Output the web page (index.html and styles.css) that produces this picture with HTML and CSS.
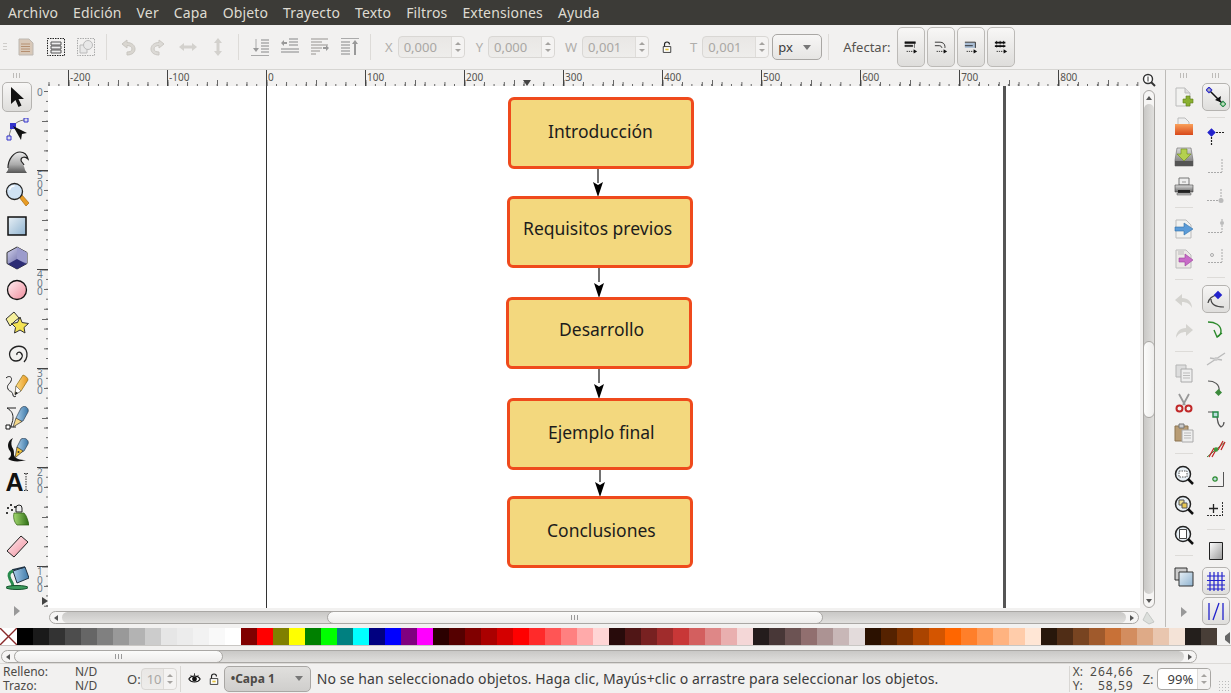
FILE: index.html
```html
<!DOCTYPE html>
<html lang="es">
<head>
  <meta charset="UTF-8">
  <title>Inkscape</title>
  <link rel="stylesheet" href="styles.css">
</head>
<body>
  <!-- shared gradients for the icons -->
  <svg class="defs" width="0" height="0">
    <defs>
      <linearGradient id="gBlue" x1="0" y1="0" x2="1" y2="1"><stop offset="0" stop-color="#e8f0f6"/><stop offset="1" stop-color="#8fb3d0"/></linearGradient>
      <linearGradient id="gPink" x1="0" y1="0" x2="1" y2="1"><stop offset="0" stop-color="#fff0f2"/><stop offset="1" stop-color="#f08c9c"/></linearGradient>
      <linearGradient id="gPurple" x1="0" y1="0" x2="1" y2="1"><stop offset="0" stop-color="#d5d5ee"/><stop offset="1" stop-color="#44448c"/></linearGradient>
      <linearGradient id="gGrey" x1="0" y1="0" x2="0" y2="1"><stop offset="0" stop-color="#ddd"/><stop offset="1" stop-color="#666"/></linearGradient>
      <linearGradient id="gWave" x1="0" y1="0" x2="0" y2="1"><stop offset="0" stop-color="#eee"/><stop offset=".6" stop-color="#aaa"/><stop offset="1" stop-color="#555"/></linearGradient>
      <linearGradient id="gOrange" x1="0" y1="0" x2="0" y2="1"><stop offset="0" stop-color="#f9a05a"/><stop offset="1" stop-color="#d8481a"/></linearGradient>
      <linearGradient id="gWhite" x1="0" y1="0" x2="1" y2="1"><stop offset="0" stop-color="#fff"/><stop offset="1" stop-color="#999"/></linearGradient>
      <linearGradient id="gNib" x1="0" y1="0" x2="1" y2="0"><stop offset="0" stop-color="#a8cce8"/><stop offset="1" stop-color="#3c78a8"/></linearGradient>
      <linearGradient id="gPencil" x1="0" y1="0" x2="1" y2="0"><stop offset="0" stop-color="#fbe08a"/><stop offset="1" stop-color="#e89820"/></linearGradient>
      <linearGradient id="gBottle" x1="0" y1="0" x2="1" y2="0"><stop offset="0" stop-color="#a4d870"/><stop offset="1" stop-color="#2c6c14"/></linearGradient>
    </defs>
  </svg>

  <nav class="menubar">
    <span>Archivo</span><span>Edición</span><span>Ver</span><span>Capa</span><span>Objeto</span><span>Trayecto</span><span>Texto</span><span>Filtros</span><span>Extensiones</span><span>Ayuda</span>
  </nav>

  <div class="toolbar">
    <div class="grip"></div>
    <div class="tb-icon"><svg class="i18" viewBox="0 0 18 18"><path d="M2 1h10l4 4v12H2z" fill="#d8c8b8" stroke="#bdb8b2"/><path d="M4 6h9M4 8.500h9M4 11h9M4 13.500h9" stroke="#b58f70" stroke-width="1.200"/></svg></div>
    <div class="tb-icon"><svg class="i18" viewBox="0 0 18 18"><path d="M.5.500h17v17H.5z" fill="none" stroke="#222" stroke-dasharray="1.500 1"/><path d="M4 4h10v3H4zM4 8h10v3H4zM4 12h10v3H4z" fill="#eee" stroke="#555"/></svg></div>
    <div class="tb-icon"><svg class="i18" viewBox="0 0 18 18"><path d="M.5.500h17v17H.5z" fill="none" stroke="#aaa" stroke-dasharray="1.500 1"/><path d="M3 7h7v8H3z" fill="#e8e8e8" stroke="#bbb"/><circle cx="11" cy="7" r="4.500" fill="#e8e8e8" stroke="#bbb"/></svg></div>
    <div class="tb-sep"></div>
    <div class="tb-icon"><svg class="i18" viewBox="0 0 18 18"><path d="M8 2L3 6l5 4V7.500c3 0 5 1.500 5 3.500s-2 3-5 3v3c5 0 8-2.500 8-6S13 4.500 8 4.500z" fill="#d9d6d0" stroke="#c9c6c0"/></svg></div>
    <div class="tb-icon"><svg class="i18" viewBox="0 0 18 18"><path d="M10 2l5 4-5 4V7.500c-3 0-5 1.500-5 3.500s2 3 5 3v3c-5 0-8-2.500-8-6s3-6.500 8-6.500z" fill="#dcdad6" stroke="#cbc8c3"/></svg></div>
    <div class="tb-icon"><svg class="i18" viewBox="0 0 18 18"><path d="M0 9l5-4v2.500h8V5l5 4-5 4v-2.500H5V13z" fill="#d3d1cd"/></svg></div>
    <div class="tb-icon"><svg class="i18" viewBox="0 0 18 18"><path d="M9 0l4 5h-2.500v8H13l-4 5-4-5h2.500V5H5z" fill="#d3d1cd"/></svg></div>
    <div class="tb-sep"></div>
    <div class="tb-icon"><svg class="i18" viewBox="0 0 18 18"><path d="M0 17.500h18M5 1v11" stroke="#aaa"/><path d="M2 10l3 4 3-4z" fill="#999"/><path d="M10 2h8M10 5h8M10 8h8M10 11h8M10 14h8" stroke="#aaa" stroke-width="1.500"/></svg></div>
    <div class="tb-icon"><svg class="i18" viewBox="0 0 18 18"><path d="M8 1h9M8 4h9M8 7h9M0 11h18M0 14h18" stroke="#aaa" stroke-width="1.500"/><path d="M0 5l3-3v2h3v2H3v2z" fill="#999"/></svg></div>
    <div class="tb-icon"><svg class="i18" viewBox="0 0 18 18"><path d="M0 1h17M0 4h11M0 7h17M0 10h11M0 13h9M0 16h5" stroke="#b5b3b0" stroke-width="1.500"/><path d="M18 10l-3-3v2h-3v2h3v2z" fill="#999"/></svg></div>
    <div class="tb-icon"><svg class="i18" viewBox="0 0 18 18"><path d="M0 .500h18" stroke="#aaa"/><path d="M0 4h9M0 7h9M0 10h9M0 13h9M0 16h9" stroke="#aaa" stroke-width="1.500"/><path d="M14 2l-3 4h2v11h2V6h2z" fill="#999"/></svg></div>
    <div class="tb-sep"></div>

    <label class="xy xy-x">X</label>
    <div class="spin"><span>0,000</span><i class="spin-arrows"></i></div>
    <label class="xy xy-y">Y</label>
    <div class="spin"><span>0,000</span><i class="spin-arrows"></i></div>
    <label class="xy xy-w">W</label>
    <div class="spin"><span>0,001</span><i class="spin-arrows"></i></div>
    <svg class="lock-big" width="10" height="12" viewBox="0 0 12 14"><path d="M3 7V4a3 3 0 0 1 6 0" fill="none" stroke="#222" stroke-width="1.400"/><path d="M1.500 6.500h9v7h-9z" fill="#fff" stroke="#222"/><path d="M4 9h4v2H4z" fill="#e4c23c"/></svg>
    <label class="xy xy-t">T</label>
    <div class="spin"><span>0,001</span><i class="spin-arrows"></i></div>
    <div class="combo combo-unit"><span>px</span><i class="combo-arrow"></i></div>
    <div class="tb-sep tb-sep-unit"></div>
    <span class="affect-label">Afectar:</span>
    <div class="affect">
      <button class="affect-btn"><svg class="i14" viewBox="0 0 16 16"><path d="M1 2h12v2H1zM1 6h9v1.500H1zM12 4v5" fill="#111" stroke="#111" stroke-width=".6"/><path d="M3 13h8" stroke="#222" stroke-dasharray="1.500 1"/><path d="M11 10.500l4 2.500-4 2.500z" fill="#111"/></svg></button>
      <button class="affect-btn"><svg class="i14" viewBox="0 0 16 16"><path d="M1 2.500h6c3 0 5.500 2 5.500 5V9M1 6.500h5c1.500 0 3 1 3 2.500" fill="none" stroke="#222"/><path d="M3 13h8" stroke="#222" stroke-dasharray="1.500 1"/><path d="M11 10.500l4 2.500-4 2.500z" fill="#111"/></svg></button>
      <button class="affect-btn"><svg class="i14" viewBox="0 0 16 16"><path d="M1 3h12v6H1z" fill="#a9bdd4"/><path d="M1 2.500h12M13 2.500V9M1 6.500h9" stroke="#222"/><path d="M3 13h8" stroke="#222" stroke-dasharray="1.500 1"/><path d="M11 10.500l4 2.500-4 2.500z" fill="#111"/></svg></button>
      <button class="affect-btn"><svg class="i14" viewBox="0 0 16 16"><path d="M1 3h12M1 7h12" stroke="#111" stroke-width="2"/><path d="M3 1v8M7 1v8M11 1v8" stroke="#111" stroke-dasharray="1.500 1"/><path d="M3 13h8" stroke="#222" stroke-dasharray="1.500 1"/><path d="M11 10.500l4 2.500-4 2.500z" fill="#111"/></svg></button>
    </div>
  </div>

  <div class="main">
    <!-- drawing tools -->
    <aside class="tools">
      <div class="dock-handle"></div>
      <div class="tool on"><svg class="i24" viewBox="0 0 24 24"><path d="M6 2v17l4.500-4 3 7 3-1.500-3-6.500H19z" fill="#111"/></svg></div>
      <div class="tool"><svg class="i24" viewBox="0 0 24 24"><path d="M4 19C5 10 10 3 19 2" fill="none" stroke="#777"/><path d="M2 18h4v4H2zM19 0h4v4h-4z" fill="#dde" stroke="#33c"/><path d="M5 5h6v6H5z" fill="#33c"/><path d="M8 8l14 7-5 1-1 6z" fill="#111"/></svg></div>
      <div class="tool"><svg class="i24" viewBox="0 0 24 24"><path d="M1 23l2-3c0-3 1-3 1-6C5 7 10 2 15 2c4 0 7 3 8 7-3-3-7-2-7 1 0 3 3 4 4 10l2 3z" fill="url(#gWave)"/><path d="M3 18C3 9 9 2 15 2c4 0 7 3 8 7-3-3-7-2-7 1 0 2 2 3 3 5" fill="none" stroke="#222" stroke-width="1.200"/></svg></div>
      <div class="tool"><svg class="i24" viewBox="0 0 24 24"><path d="M14 15l3-2 7 8-3 3z" fill="#e89c24" stroke="#a86a10" stroke-width=".7"/><circle cx="9.500" cy="9.500" r="8" fill="#cfe2f4" stroke="#222" stroke-width="1.300"/><path d="M4.500 8a5 5 0 0 1 5-4" fill="none" stroke="#fff" stroke-width="1.500"/></svg></div>
      <div class="tool"><svg class="i24" viewBox="0 0 24 24"><path d="M3 3h18v18H3z" fill="url(#gBlue)" stroke="#111" stroke-width="1.500"/></svg></div>
      <div class="tool"><svg class="i24" viewBox="0 0 24 24"><path d="M12 1l10 5.500v11L12 23 2 17.500v-11z" fill="url(#gPurple)" stroke="#333"/><path d="M12 1l10 5.500v11l-10-4z" fill="#9c9ccc"/><path d="M3 18l9-5 9 5-9 5z" fill="#2c2c74"/></svg></div>
      <div class="tool"><svg class="i24" viewBox="0 0 24 24"><circle cx="12" cy="12" r="9.500" fill="url(#gPink)" stroke="#111" stroke-width="1.300"/></svg></div>
      <div class="tool"><svg class="i24" viewBox="0 0 24 24"><path d="M1 9l8-7 5 6-4 3-5 5z" fill="#f6f09c" stroke="#333"/><path d="M15 7l2 5.500 6.500 1-4.500 4 1 5.500-5-3-5.500 3 1-5.500-4-4 6-1z" fill="#f4e252" stroke="#333"/></svg></div>
      <div class="tool"><svg class="i24" viewBox="0 0 24 24"><path d="M12 13c-1-2 2-4 4-2 3 3 0 8-5 8-6 0-8-7-5-11 4-5 12-5 15 0 2 4 1 9-2 12" fill="none" stroke="#222" stroke-width="1.300"/></svg></div>
      <div class="tool"><svg class="i24" viewBox="0 0 24 24"><path d="M1 4c3-3 7-1 5 3-1 3-5 4-3 8 1 3 4 1 5 6 0 2 2 2 3 1" fill="none" stroke="#222"/><path d="M10 20l1-8 7-11c3 1 5 3 5 5l-7 11z" fill="url(#gPencil)" stroke="#8a6a10" stroke-width=".7"/><path d="M10 21l1-9 5 5z" fill="#fff" stroke="#555" stroke-width=".6"/><path d="M10 21l.5-3.500 2.500 1.500z" fill="#111"/></svg></div>
      <div class="tool"><svg class="i24" viewBox="0 0 24 24"><path d="M2 2h9M2 2c5 3 6 6 6 10s-2 6-2 9" fill="none" stroke="#222"/><path d="M1 19h4v4H1z" fill="#fff" stroke="#111"/><path d="M5 21h6" stroke="#222"/><path d="M11 12l5-10 3-2c3 1 5 3 4 6l-5 9-4 1z" fill="url(#gNib)" stroke="#345" stroke-width=".7"/><path d="M8 21l3-9 6 3.500z" fill="#f4d88a" stroke="#333" stroke-width=".7"/></svg></div>
      <div class="tool"><svg class="i24" viewBox="0 0 24 24"><path d="M8 0C2 3 2 9 5 13c2 3 1 6-2 8 4 3 12 3 18 1-6 0-11-1-12-5 0-4 0-5-2-8-1-3-1-6 1-9z" fill="#111"/><path d="M12 9l4-8 3-1c3 1 5 3 4 6l-4 7-4 2z" fill="url(#gNib)" stroke="#345" stroke-width=".7"/><path d="M10 20l2-11 6 4z" fill="#f4c53a" stroke="#333" stroke-width=".7"/><circle cx="13.500" cy="14" r="1" fill="#333"/></svg></div>
      <div class="tool tool-text"><span>A</span><svg width="5" height="18" viewBox="0 0 5 18"><path d="M0 .500h4M2 .500v17M0 17.500h4" fill="none" stroke="#333" stroke-dasharray="1.500 1"/></svg></div>
      <div class="tool"><svg class="i24" viewBox="0 0 24 24"><circle cx="3" cy="6" r="1"/><circle cx="6" cy="3" r="1"/><circle cx="7" cy="8" r="1"/><circle cx="2" cy="11" r="1"/><circle cx="10" cy="5" r="1"/><path d="M11 6a3 3 0 0 1 6 0v4h-6z" fill="#eee" stroke="#222"/><path d="M9 11h10c3 3 4 8 5 12H12c-3-3-4-8-3-12z" fill="url(#gBottle)" stroke="#2c5c10" stroke-width=".7"/></svg></div>
      <div class="tool"><svg class="i24" viewBox="0 0 24 24"><path d="M16 2l7 6L9 23l-7-6z" fill="url(#gPink)" stroke="#222"/></svg></div>
      <div class="tool"><svg class="i24" viewBox="0 0 24 24"><path d="M8 5l12-4 4 11-12 5z" fill="url(#gNib)" stroke="#234"/><path d="M7 4l13-3" stroke="#234" stroke-width="1.500"/><path d="M8 5c-4 1-5 4-3 8 2 3 3 5 3 8" fill="none" stroke="#288a4c" stroke-width="3"/><ellipse cx="12" cy="21.500" rx="11" ry="2" fill="#3c9c5c" stroke="#14502c"/></svg></div>
      <div class="tool-more"><i class="tri-right"></i></div>
    </aside>

    <div class="workspace">
      <div class="ruler-corner"></div>
      <div class="hruler">
        <div class="rh rh-lead"></div>
        <div class="rh">-200</div><div class="rh">-100</div><div class="rh">0</div><div class="rh">100</div><div class="rh">200</div><div class="rh">300</div><div class="rh">400</div><div class="rh">500</div><div class="rh">600</div><div class="rh">700</div><div class="rh">800</div>
        <i class="ruler-mark-h"></i>
      </div>
      <div class="zoom-corner"><svg width="14" height="14" viewBox="0 0 14 14"><circle cx="6" cy="6" r="4.500" fill="#fff" stroke="#333" stroke-width="1.400"/><path d="M9 9l4 4" stroke="#333" stroke-width="2"/><path d="M6 3.500v5" stroke="#333"/></svg></div>

      <div class="vruler">
        <div class="rv rv-lead">0</div><div class="rv">500</div><div class="rv">400</div><div class="rv">300</div><div class="rv">200</div><div class="rv">100</div>
        <i class="ruler-mark-v"></i>
      </div>

      <div class="canvas">
        <div class="page-line"></div>
        <div class="page-line thick"></div>
        <svg class="connectors" width="1092" height="522">
          <g stroke="#444" stroke-width="1.500">
            <path d="M550 83v14M551 182v14M551 283v14M552 384v12"/>
          </g>
          <path d="M550 111l-5-15 5 3 5-3z"/>
          <path d="M551 212l-5-15 5 3 5-3z"/>
          <path d="M551 313l-5-15 5 3 5-3z"/>
          <path d="M552 411l-5-15 5 3 5-3z"/>
        </svg>
        <div class="node n1">Introducción</div>
        <div class="node n2">Requisitos previos</div>
        <div class="node n3">Desarrollo</div>
        <div class="node n4">Ejemplo final</div>
        <div class="node n5">Conclusiones</div>
      </div>

      <div class="vscroll">
        <i class="sb-end"><i class="tri-up"></i></i>
        <div class="sb-track-v"><div class="sb-thumb-v"></div></div>
        <i class="sb-end"><i class="tri-down"></i></i>
      </div>

      <div class="hscroll-row">
        <div class="hscroll">
          <i class="sb-end"><i class="tri-left"></i></i>
          <div class="sb-track"><div class="sb-thumb main-thumb"><b class="dots"></b></div></div>
          <i class="sb-end"><i class="tri-right-sm"></i></i>
        </div>
        <svg class="cms" width="14" height="14" viewBox="0 0 14 14"><path d="M6 1l7 10-5 2-6-4z" fill="#dcdfdc" stroke="#c5c8c5"/></svg>
      </div>
    </div>

    <!-- commands -->
    <aside class="cmds">
      <div class="dock-handle"></div>
      <div class="cmd"><svg class="i20" viewBox="0 0 20 20"><path d="M2 1h9l5 5v13H2z" fill="#f2f2f0" stroke="#bbb"/><path d="M11 1v5h5" fill="#ddd" stroke="#bbb"/><path d="M12 9h4v3h3v4h-3v3h-4v-3H9v-4h3z" fill="#8ab030" stroke="#5c7c18" stroke-width=".6"/></svg></div>
      <div class="cmd"><svg class="i20" viewBox="0 0 20 20"><path d="M4 1h7l4 4v5H4z" fill="#eee" stroke="#bbb"/><path d="M1 7h18v11H1z" fill="url(#gOrange)"/></svg></div>
      <div class="cmd"><svg class="i20" viewBox="0 0 20 20"><path d="M3 1h14l2 12v6H1v-6z" fill="url(#gGrey)" stroke="#666" stroke-width=".6"/><path d="M1 14h18v5H1z" fill="#555"/><path d="M7 2h6v5h4l-7 7-7-7h4z" fill="#b4d050" stroke="#6c8c18" stroke-width=".6"/></svg></div>
      <div class="cmd"><svg class="i20" viewBox="0 0 20 20"><path d="M5 1h10v7H5z" fill="#eee" stroke="#777"/><path d="M1 8h18v7H1z" fill="url(#gGrey)" stroke="#444" stroke-width=".6"/><path d="M4 13h12v3H4z" fill="#222"/><path d="M3 16h14v2H3z" fill="#bbb" stroke="#555" stroke-width=".5"/><path d="M8 5h4" stroke="#999"/></svg></div>
      <div class="dock-sep"></div>
      <div class="cmd"><svg class="i20" viewBox="0 0 20 20"><path d="M2 1h10l5 5v13H2z" fill="#f2f2f0" stroke="#bbb"/><path d="M1 8h9V4l9 6-9 6v-4H1z" fill="#5c9cd8" stroke="#3070a8" stroke-width=".6"/></svg></div>
      <div class="cmd"><svg class="i20" viewBox="0 0 20 20"><path d="M2 1h10l5 5v13H2z" fill="#ece9e6" stroke="#bbb"/><path d="M4 3h6M4 5h6" stroke="#bbb"/><path d="M5 9h6V5l8 6-8 6v-4H5z" fill="#c86cc8" stroke="#9c409c" stroke-width=".6"/></svg></div>
      <div class="dock-sep"></div>
      <div class="cmd"><svg class="i20" viewBox="0 0 20 20"><path d="M8 3L1 9l7 6v-4c5 0 8 2 10 6 0-6-4-10-10-10z" fill="#d4d3cf"/></svg></div>
      <div class="cmd"><svg class="i20" viewBox="0 0 20 20"><path d="M12 3l7 6-7 6v-4c-5 0-8 2-10 6 0-6 4-10 10-10z" fill="#d4d3cf"/></svg></div>
      <div class="dock-sep"></div>
      <div class="cmd"><svg class="i20" viewBox="0 0 20 20"><path d="M2 2h10v12H2z" fill="#ddd" stroke="#b5b5b5"/><path d="M7 6h11v13H7z" fill="#eee" stroke="#aaa"/><path d="M9 10h7M9 12.500h7M9 15h7" stroke="#bbb"/></svg></div>
      <div class="cmd"><svg class="i20" viewBox="0 0 20 20"><path d="M5 1l6 11M15 1L9 12" stroke="#999" stroke-width="1.800"/><circle cx="5.500" cy="15.500" r="3" fill="none" stroke="#c02828" stroke-width="2"/><circle cx="14.500" cy="15.500" r="3" fill="none" stroke="#c02828" stroke-width="2"/></svg></div>
      <div class="cmd"><svg class="i20" viewBox="0 0 20 20"><path d="M1 3h13v15H1z" fill="#b89c74" stroke="#8c7450"/><path d="M5 1h5v4H5z" fill="#ccc" stroke="#777"/><path d="M8 7h11v12H8z" fill="#eee" stroke="#aaa"/><path d="M10 10h7M10 12.500h7M10 15h7" stroke="#bbb"/></svg></div>
      <div class="dock-sep"></div>
      <div class="cmd"><svg class="i20" viewBox="0 0 20 20"><circle cx="9" cy="9" r="7.500" fill="#e8f0f6" stroke="#222" stroke-width="1.500"/><path d="M5 6h8v6H5z" fill="#fff" stroke="#555" stroke-dasharray="1.500 1"/><path d="M14 14l5 5" stroke="#111" stroke-width="2.500"/></svg></div>
      <div class="cmd"><svg class="i20" viewBox="0 0 20 20"><circle cx="9" cy="9" r="7.500" fill="#e8f0f6" stroke="#222" stroke-width="1.500"/><path d="M5 5h5v5H5z" fill="#f0e090" stroke="#555"/><path d="M8 8h5v5H8z" fill="#e8c850" stroke="#555"/><path d="M14 14l5 5" stroke="#111" stroke-width="2.500"/></svg></div>
      <div class="cmd"><svg class="i20" viewBox="0 0 20 20"><circle cx="9" cy="9" r="7.500" fill="#e8f0f6" stroke="#222" stroke-width="1.500"/><path d="M5.500 4.500h7v9h-7z" fill="#fff" stroke="#444"/><path d="M14 14l5 5" stroke="#111" stroke-width="2.500"/></svg></div>
      <div class="dock-sep"></div>
      <div class="cmd"><svg class="i20" viewBox="0 0 20 20"><path d="M1 1h12v12H1z" fill="#ccc" stroke="#333"/><path d="M5 5h14v14H5z" fill="url(#gBlue)" stroke="#333"/></svg></div>
      <div class="cmd-more"><i class="tri-right"></i></div>
    </aside>

    <!-- snap bar -->
    <aside class="snaps">
      <div class="dock-handle"></div>
      <div class="snap on"><svg class="i20" viewBox="0 0 20 20"><path d="M3 3l14 14" stroke="#111" stroke-width="1.500"/><path d="M1 1h4v4H1z" fill="#aab" stroke="#22c" transform="rotate(45 3 3)"/><path d="M15 15h4v4h-4z" fill="#bdb" stroke="#284" transform="rotate(45 17 17)"/><path d="M15 9l-1 6-5-2z" fill="#111"/></svg></div>
      <div class="dock-sep dashed-off"></div>
      <div class="snap"><svg class="i20" viewBox="0 0 20 20"><path d="M7 5.500h11M5.500 7v11" stroke="#222" stroke-width="1.200" stroke-dasharray="2 1"/><path d="M3 3h5v5H3z" fill="#22c" stroke="#22c" transform="rotate(45 5.500 5.500)"/></svg></div>
      <div class="snap"><svg class="i20" viewBox="0 0 20 20"><path d="M2 15.500h14M16 2v13" stroke="#aaa" stroke-dasharray="2 1"/></svg></div>
      <div class="snap"><svg class="i20" viewBox="0 0 20 20"><path d="M1 13.500h14M15 2v10" stroke="#aaa" stroke-dasharray="2 1"/><circle cx="15" cy="13.500" r="2.500" fill="#bbb"/></svg></div>
      <div class="snap"><svg class="i20" viewBox="0 0 20 20"><path d="M2 15.500h14M16 2v13" stroke="#aaa" stroke-dasharray="2 1"/><circle cx="16" cy="6" r="2" fill="#bbb"/></svg></div>
      <div class="snap"><svg class="i20" viewBox="0 0 20 20"><path d="M2 15.500h14M16 2v13" stroke="#aaa" stroke-dasharray="2 1"/><circle cx="6" cy="8" r="1.500" fill="none" stroke="#aaa"/></svg></div>
      <div class="dock-sep"></div>
      <div class="snap on"><svg class="i20" viewBox="0 0 20 20"><path d="M2 14C3 8 8 7 12 5M5 10c0 5 4 8 13 8" fill="none" stroke="#444" stroke-width="1.200"/><path d="M9 3h6v6H9z" fill="#22c" transform="rotate(45 12 6)"/></svg></div>
      <div class="snap"><svg class="i20" viewBox="0 0 20 20"><path d="M2 3c7 0 13 3 13 9 0 3-2 5-4 6" fill="none" stroke="#2c8a2c" stroke-width="1.400"/><path d="M8 11l3 7 5-4" fill="none" stroke="#2c8a2c" stroke-width="1.400"/></svg></div>
      <div class="snap"><svg class="i20" viewBox="0 0 20 20"><path d="M1 16L19 4M4 9l12 2" stroke="#bbb" stroke-width="1.400"/><circle cx="10" cy="10" r="2" fill="#ccc"/></svg></div>
      <div class="snap"><svg class="i20" viewBox="0 0 20 20"><path d="M2 2c6 0 12 3 11 10" fill="none" stroke="#555" stroke-width="1.200"/><path d="M10 11h5v5h-5z" fill="#3c8a3c" transform="rotate(45 12.500 13.500)"/></svg></div>
      <div class="snap"><svg class="i20" viewBox="0 0 20 20"><path d="M2 3h5M11 8c1 4 0 7 4 10 2-1 3-3 3-5" fill="none" stroke="#555" stroke-width="1.200"/><path d="M7 3h5v5H7z" fill="#bdd" stroke="#284" stroke-width="1.400"/></svg></div>
      <div class="snap"><svg class="i20" viewBox="0 0 20 20"><path d="M1 18L19 3" stroke="#3c8a3c"/><path d="M3 18L8 9M6 18l5-9M12 11l5-9M15 11l4-8" stroke="#c02828" stroke-width="1.300"/><circle cx="10" cy="10.500" r="2.200" fill="#3c9a3c"/></svg></div>
      <div class="snap"><svg class="i20" viewBox="0 0 20 20"><path d="M2 17.500h15.500V3" fill="none" stroke="#555"/><circle cx="9" cy="10" r="2.200" fill="#bdd" stroke="#2c8a2c" stroke-width="1.200"/></svg></div>
      <div class="snap"><svg class="i20" viewBox="0 0 20 20"><path d="M3 9.500h9M7.500 5v9" stroke="#222" stroke-width="1.300"/><path d="M1 16.500h16M16.500 3v13" stroke="#333" stroke-dasharray="2 1"/></svg></div>
      <div class="dock-sep"></div>
      <div class="snap"><svg class="i20" viewBox="0 0 20 20"><path d="M3.500 1.500h13v17h-13z" fill="url(#gWhite)" stroke="#222"/></svg></div>
      <div class="snap on"><svg class="i20" viewBox="0 0 20 20"><path d="M1 5h18M1 9.500h18M1 14h18M1 18h18M4 1v19M8 1v19M12 1v19M16 1v19" stroke="#2222cc" stroke-width="1.200"/></svg></div>
      <div class="snap on"><svg class="i20" viewBox="0 0 20 20"><path d="M3 2v17M17 2v17M7 19L13 2" stroke="#2222cc" stroke-width="1.300"/></svg></div>
    </aside>
  </div>

  <div class="palette">
    <div class="swatch-none"><svg width="17" height="17" viewBox="0 0 17 17"><path d="M0 0l17 17M17 0L0 17" stroke="#8a2a2a" stroke-width="1.400"/></svg></div>
    <span style="background:#000000"></span><span style="background:#1a1a1a"></span><span style="background:#333333"></span><span style="background:#4d4d4d"></span><span style="background:#666666"></span><span style="background:#808080"></span><span style="background:#999999"></span><span style="background:#b3b3b3"></span><span style="background:#cccccc"></span><span style="background:#e6e6e6"></span><span style="background:#ececec"></span><span style="background:#f2f2f2"></span><span style="background:#f9f9f9"></span><span style="background:#ffffff"></span>
    <span style="background:#800000"></span><span style="background:#ff0000"></span><span style="background:#808000"></span><span style="background:#ffff00"></span><span style="background:#008000"></span><span style="background:#00ff00"></span><span style="background:#008080"></span><span style="background:#00ffff"></span><span style="background:#000080"></span><span style="background:#0000ff"></span><span style="background:#800080"></span><span style="background:#ff00ff"></span>
    <span style="background:#2b0000"></span><span style="background:#550000"></span><span style="background:#800000"></span><span style="background:#aa0000"></span><span style="background:#d40000"></span><span style="background:#ff0000"></span><span style="background:#ff2a2a"></span><span style="background:#ff5555"></span><span style="background:#ff8080"></span><span style="background:#ffaaaa"></span><span style="background:#ffd5d5"></span>
    <span style="background:#280b0b"></span><span style="background:#501616"></span><span style="background:#782121"></span><span style="background:#a02c2c"></span><span style="background:#c83737"></span><span style="background:#d35f5f"></span><span style="background:#de8787"></span><span style="background:#e9afaf"></span><span style="background:#f4d7d7"></span>
    <span style="background:#241c1c"></span><span style="background:#483737"></span><span style="background:#6c5353"></span><span style="background:#916f6f"></span><span style="background:#ac9393"></span><span style="background:#c8b7b7"></span><span style="background:#e3dbdb"></span>
    <span style="background:#2b1100"></span><span style="background:#552200"></span><span style="background:#803300"></span><span style="background:#aa4400"></span><span style="background:#d45500"></span><span style="background:#ff6600"></span><span style="background:#ff7f2a"></span><span style="background:#ff9955"></span><span style="background:#ffb380"></span><span style="background:#ffccaa"></span><span style="background:#ffe6d5"></span>
    <span style="background:#28170b"></span><span style="background:#502d16"></span><span style="background:#784421"></span><span style="background:#a05a2c"></span><span style="background:#c87137"></span><span style="background:#d38d5f"></span><span style="background:#deaa87"></span><span style="background:#e9c6af"></span><span style="background:#f4e3d7"></span>
    <span style="background:#241f1c"></span><span style="background:#483e37"></span>
    <i class="palette-more"></i>
  </div>

  <div class="palette-scroll">
    <div class="hscroll pal">
      <i class="sb-end"><i class="tri-left"></i></i>
      <div class="sb-track"><div class="sb-thumb pal-thumb"><b class="dots"></b></div></div>
      <i class="sb-end"><i class="tri-right-sm"></i></i>
    </div>
  </div>

  <footer class="statusbar">
    <div class="fillstroke">
      <div><span>Relleno:</span><span>N/D</span></div>
      <div><span>Trazo:</span><span>N/D</span></div>
    </div>
    <label class="opacity-label">O:</label>
    <div class="spin spin-o"><span>10</span><i class="spin-arrows"></i></div>
    <div class="st-sep"></div>
    <svg class="eye" width="13" height="12" viewBox="0 0 16 14"><path d="M1 7c3-5 11-5 14 0-3 5-11 5-14 0z" fill="#fff" stroke="#111" stroke-width="1.300"/><circle cx="8" cy="7" r="3" fill="#111"/><path d="M3 2l2 2M8 0v3M13 2l-2 2" stroke="#111"/></svg>
    <svg class="lock-small" width="10" height="12" viewBox="0 0 12 14"><path d="M3 7V4a3 3 0 0 1 6 0" fill="none" stroke="#222" stroke-width="1.400"/><path d="M1.500 6.500h9v7h-9z" fill="#fff" stroke="#222"/><path d="M4 9h4v2H4z" fill="#e4c23c"/></svg>
    <div class="combo combo-layer"><span>•Capa 1</span><i class="combo-arrow"></i></div>
    <p class="message">No se han seleccionado objetos. Haga clic, Mayús+clic o arrastre para seleccionar los objetos.</p>
    <div class="st-sep st-sep-coords"></div>
    <div class="coords">
      <div><span>X:</span><span>264,66</span></div>
      <div><span>Y:</span><span>58,59</span></div>
    </div>
    <label class="zoom-label">Z:</label>
    <div class="spin spin-z"><span>99%</span><i class="spin-arrows"></i></div>
    <i class="resize-grip"></i>
  </footer>
</body>
</html>
```

FILE: styles.css
```css
/* Inkscape window, Ubuntu Ambiance look */
* {
  box-sizing: border-box;
}
html, body {
  margin: 0;
  padding: 0;
}
body {
  width: 1231px;
  height: 693px;
  overflow: hidden;
  display: flex;
  flex-direction: column;
  background: #f2f1f0;
  color: #3c3c3c;
  font-family: "Noto Sans", sans-serif;
  font-size: 13px;
}
svg {
  display: block;
}
i {
  display: block;
  font-style: normal;
}
.defs {
  position: absolute;
}
.i14 { width: 14px; height: 14px; }
.i18 { width: 18px; height: 18px; }
.i20 { width: 20px; height: 20px; }
.i24 { width: 24px; height: 24px; }

/* menu */
.menubar {
  height: 25px;
  flex: none;
  display: flex;
  gap: 15px;
  align-items: center;
  padding-left: 8px;
  background: #3c3b37;
  color: #dfdbd2;
  font-size: 14px;
  letter-spacing: .15px;
}

/* top toolbar */
.toolbar {
  height: 45px;
  flex: none;
  display: flex;
  align-items: center;
  padding-left: 3px;
  border-bottom: 1px solid #d6d5d2;
}
.grip {
  width: 4px;
  height: 8px;
  margin-right: 4px;
  background: repeating-linear-gradient(#cfcdca 0 1px, transparent 1px 3px);
}
.tb-icon {
  width: 30px;
  display: flex;
  justify-content: center;
}
.tb-sep {
  width: 1px;
  height: 26px;
  margin: 0 6px 0 5px;
  background: #dddbd8;
}
.xy {
  color: #b0aeab;
  font-size: 13px;
}
.xy-x { margin: 0 5px 0 8px; }
.xy-y { margin: 0 5px 0 11px; }
.xy-w { margin: 0 5px 0 10px; }
.xy-t { margin: 0 5px 0 18px; }
.spin {
  width: 67px;
  height: 22px;
  display: flex;
  align-items: center;
  padding-left: 5px;
  background: linear-gradient(#e9e7e5, #eeedeb);
  border: 1px solid #d9d7d4;
  border-radius: 4px;
  color: #a9a7a4;
  position: relative;
}
.spin-arrows {
  position: absolute;
  right: 0;
  top: 0;
  width: 13px;
  height: 100%;
  background: #f4f3f2;
  border-left: 1px solid #dedcd9;
  border-radius: 0 4px 4px 0;
}
.spin-arrows::before,
.spin-arrows::after {
  content: "";
  position: absolute;
  left: 3px;
  border-left: 3px solid transparent;
  border-right: 3px solid transparent;
}
.spin-arrows::before {
  top: 5px;
  border-bottom: 3px solid #a5a3a0;
}
.spin-arrows::after {
  bottom: 5px;
  border-top: 3px solid #a5a3a0;
}
.lock-big {
  margin-left: 13px;
}
.combo {
  display: flex;
  align-items: center;
  justify-content: space-between;
  background: linear-gradient(#f7f6f5, #e6e5e3);
  border: 1px solid #a9a7a4;
  border-radius: 5px;
}
.combo-unit {
  width: 50px;
  height: 26px;
  margin-left: 3px;
  padding: 0 10px 0 5px;
}
.combo-arrow {
  border-left: 4px solid transparent;
  border-right: 4px solid transparent;
  border-top: 5px solid #777;
}
.tb-sep-unit {
  margin: 0 0 0 6px;
}
.affect-label {
  margin-left: 14px;
  color: #55534f;
  width: 45px;
  white-space: nowrap;
}
.affect {
  display: flex;
  gap: 2px;
  margin-left: 9px;
}
.affect-btn {
  width: 28px;
  height: 40px;
  padding: 0;
  display: flex;
  align-items: center;
  justify-content: center;
  background: linear-gradient(#f8f7f6, #dedddb);
  border: 1px solid #bcbab7;
  border-radius: 5px;
}

/* middle area */
.main {
  height: 557px;
  flex: none;
  display: flex;
}
.dock-handle {
  width: 8px;
  height: 12px;
  flex: none;
  margin: 0 auto;
  background: linear-gradient(90deg, #bdbbb8 1px, transparent 1px) 0 3px / 3px 5px repeat-x;
}
.tools {
  width: 34px;
  flex: none;
  display: flex;
  flex-direction: column;
  align-items: center;
}
.tool {
  width: 30px;
  height: 32px;
  flex: none;
  display: flex;
  align-items: center;
  justify-content: center;
}
.tool.on {
  height: 30px;
  margin-bottom: 2px;
  background: linear-gradient(#f8f7f6, #dedddb);
  border: 1px solid #b5b3b0;
  border-radius: 5px;
}
.tool-text {
  gap: 0;
  font-family: "Liberation Sans", sans-serif;
  font-weight: bold;
  font-size: 25px;
  line-height: 28px;
  color: #111;
}
.tool-more {
  margin-top: 12px;
}
.tri-right {
  border-top: 5px solid transparent;
  border-bottom: 5px solid transparent;
  border-left: 6px solid #999;
}

.workspace {
  width: 1131px;
  flex: none;
  display: grid;
  grid-template-columns: 14px 1092px 25px;
  grid-template-rows: 16px 522px 19px;
}

/* rulers */
.hruler {
  position: relative;
  display: flex;
  overflow: hidden;
  font-size: 10px;
  line-height: 11px;
  color: #55534f;
  background-image:
    linear-gradient(90deg, #666 1px, transparent 1px),
    linear-gradient(90deg, #666 1px, transparent 1px),
    linear-gradient(90deg, #666 1px, transparent 1px);
  background-size: 9.900px 2px, 19.800px 4px, 49.500px 6px;
  background-repeat: repeat-x;
  background-position: 0.500px 100%, 0.500px 100%, 20.500px 100%;
}
.rh {
  width: 99.030px;
  flex: none;
  padding: 2px 0 0 1px;
  border-left: 1px solid #444;
}
.rh-lead {
  width: 20px;
  border-left: none;
}
.ruler-mark-h {
  position: absolute;
  left: 475px;
  bottom: 0;
  border-left: 4px solid transparent;
  border-right: 4px solid transparent;
  border-top: 6px solid #444;
}
.vruler {
  position: relative;
  overflow: hidden;
  font-size: 10px;
  color: #6a7a88;
  background-image:
    linear-gradient(#666 1px, transparent 1px),
    linear-gradient(#666 1px, transparent 1px),
    linear-gradient(#666 1px, transparent 1px);
  background-size: 2px 9.900px, 4px 19.800px, 6px 49.500px;
  background-repeat: repeat-y;
  background-position: 100% 5px, 100% 5px, 100% 35px;
}
.rv {
  height: 99.030px;
  margin-left: 3px;
  border-top: 1px solid #444;
  line-height: 8.500px;
}
.rv:not(.rv-lead) {
  word-break: break-all;
  padding-right: 4px;
}
.rv-lead {
  height: 84px;
  padding-top: 2px;
  border-top: none;
}
.ruler-mark-v {
  position: absolute;
  right: 0;
  bottom: 3px;
  border-top: 4px solid transparent;
  border-bottom: 4px solid transparent;
  border-left: 6px solid #444;
}
.zoom-corner {
  padding: 3px 0 0 2px;
}

/* drawing */
.canvas {
  position: relative;
  overflow: hidden;
  background: #fff;
}
.page-line {
  position: absolute;
  left: 218px;
  top: 0;
  bottom: 0;
  width: 1px;
  background: #333;
}
.page-line.thick {
  left: 955px;
  width: 3px;
  background: #555;
}
.connectors {
  position: absolute;
  left: 0;
  top: 0;
}
.node {
  position: absolute;
  width: 186px;
  height: 72px;
  display: flex;
  align-items: center;
  background: #f3d87e;
  border: 3px solid #ef4a1c;
  border-radius: 6px;
  color: #1c1c1c;
  font-size: 17.500px;
  white-space: nowrap;
}
.n1 { left: 460px; top: 11px; padding: 0 0 4px 37px; }
.n2 { left: 459px; top: 110px; padding: 0 0 8px 13px; }
.n3 { left: 458px; top: 211px; padding: 0 0 8px 50px; }
.n4 { left: 459px; top: 312px; padding: 0 0 5px 38px; }
.n5 { left: 459px; top: 410px; padding: 0 0 5px 37px; }

/* scrollbars */
.sb-end {
  flex: none;
  display: flex;
  align-items: center;
  justify-content: center;
}
.vscroll {
  width: 12px;
  height: 518px;
  margin: 4px 0 0 3px;
  display: flex;
  flex-direction: column;
  background: #f6f5f4;
  border: 1px solid #a9a7a4;
  border-radius: 7px;
}
.vscroll .sb-end {
  height: 13px;
}
.sb-track-v {
  flex: 1;
  padding-top: 237px;
  background: linear-gradient(90deg, #c9c8c6, #e0dfdd);
  border-radius: 7px;
}
.sb-thumb-v {
  height: 77px;
  margin: 0 -1px;
  background: linear-gradient(90deg, #fbfbfa, #eeedec);
  border: 1px solid #a9a7a4;
  border-radius: 7px;
}
.tri-up {
  border-left: 3px solid transparent;
  border-right: 3px solid transparent;
  border-bottom: 4px solid #555;
}
.tri-down {
  border-left: 3px solid transparent;
  border-right: 3px solid transparent;
  border-top: 4px solid #555;
}
.tri-left {
  border-top: 3px solid transparent;
  border-bottom: 3px solid transparent;
  border-right: 4px solid #555;
}
.tri-right-sm {
  border-top: 3px solid transparent;
  border-bottom: 3px solid transparent;
  border-left: 4px solid #555;
}
.hscroll-row {
  grid-column: 1 / 4;
  display: flex;
  align-items: flex-start;
  padding: 3px 0 0 15px;
}
.hscroll {
  width: 1090px;
  height: 13px;
  display: flex;
  background: #f6f5f4;
  border: 1px solid #a9a7a4;
  border-radius: 7px;
}
.hscroll .sb-end {
  width: 12px;
}
.sb-track {
  flex: 1;
  display: flex;
  background: linear-gradient(#c9c8c6, #e0dfdd);
  border-radius: 7px;
}
.sb-thumb {
  height: 13px;
  margin-top: -1px;
  display: flex;
  align-items: center;
  justify-content: center;
  background: linear-gradient(#fbfbfa, #eeedec);
  border: 1px solid #a9a7a4;
  border-radius: 7px;
}
.main-thumb {
  width: 496px;
  margin-left: 265px;
}
.pal-thumb {
  width: 209px;
}
.dots {
  width: 8px;
  height: 5px;
  background: repeating-linear-gradient(90deg, #999 0 1px, transparent 1px 3px);
}
.cms {
  margin-left: 2px;
}
.palette-scroll {
  height: 17px;
  flex: none;
  padding: 4px 0 0 1px;
}
.hscroll.pal {
  width: 1196px;
}

/* right docks */
.cmds, .snaps {
  flex: none;
  display: flex;
  flex-direction: column;
  align-items: center;
}
.cmds {
  width: 36px;
  padding-left: 1px;
  border-left: 1px solid #bdbbb8;
}
.snaps {
  width: 30px;
}
.cmd, .snap {
  width: 28px;
  height: 30px;
  flex: none;
  display: flex;
  align-items: center;
  justify-content: center;
}
.cmd {
  width: 30px;
}
.snap.on {
  height: 28px;
  margin: 1px 0;
  background: linear-gradient(#f6f5f4, #dfdedc);
  border: 1px solid #b5b3b0;
  border-radius: 5px;
}
.dock-sep {
  width: 18px;
  height: 12px;
  flex: none;
  margin: 0 auto;
  background: linear-gradient(#dddbd8, #dddbd8) 0 5px / 100% 1px no-repeat;
}
.dashed-off {
  height: 10px;
}
.cmd-more {
  margin-top: 15px;
}

/* palette */
.palette {
  position: relative;
  height: 19px;
  flex: none;
  display: flex;
  padding: 1px 0;
  border-bottom: 1px solid #c9c7c4;
}
.palette span {
  width: 16px;
  height: 17px;
  flex: none;
}
.swatch-none {
  width: 17px;
  height: 17px;
  flex: none;
  background: #fff;
}
.palette-more {
  margin: 4px 0 0 8px;
  border-top: 4px solid transparent;
  border-bottom: 4px solid transparent;
  border-right: 5px solid #666;
}

/* status */
.statusbar {
  flex: 1;
  display: flex;
  align-items: center;
  border-top: 1px solid #dcdad7;
  font-size: 13px;
  color: #4c4a46;
  position: relative;
}
.fillstroke {
  width: 124px;
  padding-left: 3px;
  font-size: 12px;
  line-height: 14px;
}
.fillstroke div {
  display: flex;
}
.fillstroke span:first-child {
  width: 72px;
}
.opacity-label {
  margin-left: 3px;
}
.spin-o {
  width: 36px;
}
.st-sep {
  width: 1px;
  height: 26px;
  margin-left: 3px;
  background: #d9d7d4;
}
.eye {
  margin-left: 7px;
}
.lock-small {
  margin-left: 8px;
}
.combo-layer {
  width: 87px;
  height: 26px;
  margin-left: 5px;
  padding: 0 7px 0 6px;
  background: linear-gradient(#e0dfdd, #cfcecc);
  font-weight: bold;
  font-size: 12px;
}
.message {
  margin: 0 0 0 6px;
  width: 752px;
  font-size: 14px;
  letter-spacing: .12px;
  white-space: nowrap;
  color: #3c3c3c;
}
.st-sep-coords {
  margin-left: 0;
}
.coords {
  width: 61px;
  margin-left: 3px;
  font-size: 12px;
  line-height: 14px;
}
.coords div {
  display: flex;
  justify-content: space-between;
}
.coords span:last-child {
  letter-spacing: 1px;
}
.zoom-label {
  margin-left: 9px;
}
.spin-z {
  width: 54px;
  margin-left: 3px;
  background: #fff;
  border-color: #a9a7a4;
  color: #3c3c3c;
  padding-left: 10px;
}
.resize-grip {
  position: absolute;
  right: 1px;
  bottom: 1px;
  width: 12px;
  height: 12px;
  background: radial-gradient(#bbb 0.800px, transparent 1px) 0 0 / 3px 3px;
}
```
